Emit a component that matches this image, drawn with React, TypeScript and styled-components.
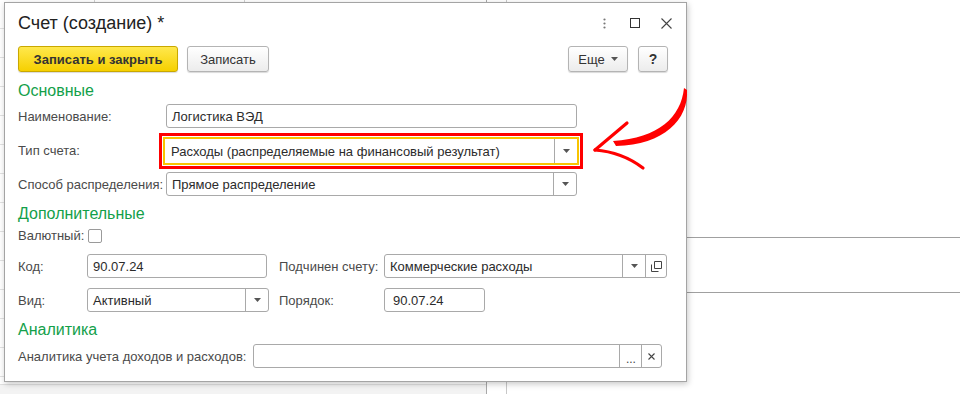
import styled, { createGlobalStyle } from 'styled-components';

const GlobalStyles = createGlobalStyle`
  html, body {
    margin: 0;
    padding: 0;
    background: #fff;
  }
  body {
    font-family: 'Liberation Sans', Arial, sans-serif;
    font-size: 13px;
    color: #333;
  }
  #root {
    width: 960px;
    height: 394px;
    position: relative;
    overflow: hidden;
  }
`;

/* backdrop: the list form behind the dialog */

const Backdrop = styled.div`
  display: flex;
  width: 960px;
  height: 394px;
`;

const LeftPane = styled.div`
  width: 486px;
  flex: 0 0 auto;
  display: flex;
  flex-direction: column;
  border-right: 1px solid #a8a8a8;
  background: repeating-linear-gradient(to bottom, transparent 0 28px, #e2e2e2 28px 29px);
`;

const HeadRow = styled.div`
  display: flex;
  height: 20px;
  background: #fff;
`;

const HeadCell = styled.div<{ $w: number }>`
  width: ${(p) => p.$w}px;
  border-right: 1px solid #d0d0d0;
`;

const PaneFill = styled.div`
  flex: 1;
`;

const PaneFooter = styled.div`
  height: 9px;
  background: #f3f3f3;
  border-top: 1px solid #e0e0e0;
`;

const Gutter = styled.div`
  width: 19px;
  flex: 0 0 auto;
  border-right: 1px solid #c8c8c8;
`;

const RightPane = styled.div`
  flex: 1;
  padding-top: 237px;
`;

const RightRow = styled.div`
  height: 54px;
  border-top: 1px solid #a0a0a0;
  border-bottom: 1px solid #a0a0a0;
`;

/* dialog window */

const Dialog = styled.div`
  position: absolute;
  left: 4px;
  top: 2px;
  width: 683px;
  height: 380px;
  box-sizing: border-box;
  border: 1px solid #a4a4a4;
  background: #fff;
  box-shadow: 1px 2px 6px rgba(0, 0, 0, 0.22);
  display: flex;
  flex-direction: column;
`;

const TitleBar = styled.div`
  height: 40px;
  display: flex;
  align-items: center;
  padding: 0 14px 0 13px;
`;

const Title = styled.div`
  flex: 1;
  font-size: 18px;
  color: #222;
`;

const TitleIcon = styled.div<{ $ml: number }>`
  margin-left: ${(p) => p.$ml}px;
  display: flex;
`;

const Body = styled.div`
  padding: 0 18px 0 13px;
  display: flex;
  flex-direction: column;
`;

const Toolbar = styled.div`
  margin-top: 3px;
  display: flex;
  gap: 9px;
`;

const Spacer = styled.div`
  flex: 1;
`;

const Button = styled.button<{ $w: number; $primary?: boolean; $strong?: boolean }>`
  width: ${(p) => p.$w}px;
  height: 26px;
  box-sizing: border-box;
  padding: 0;
  margin: 0;
  font-family: 'Liberation Sans', Arial, sans-serif;
  font-size: ${(p) => (p.$strong ? 14 : 13)}px;
  font-weight: ${(p) => (p.$primary || p.$strong ? 700 : 400)};
  color: #333;
  display: flex;
  align-items: center;
  justify-content: center;
  gap: 6px;
  border-radius: 3px;
  border: 1px solid ${(p) => (p.$primary ? '#c9a800' : '#b4b4b4')};
  background: ${(p) =>
    p.$primary ? 'linear-gradient(#ffe84d, #f6d000)' : 'linear-gradient(#ffffff, #ececec)'};
  box-shadow: 0 1px 1px rgba(0, 0, 0, 0.15);
`;

const RightTools = styled.div`
  display: flex;
  gap: 10px;
`;

const Heading = styled.div<{ $mt: number }>`
  margin-top: ${(p) => p.$mt}px;
  height: 20px;
  line-height: 20px;
  font-size: 16px;
  color: #13a04a;
`;

const TopGrid = styled.div`
  margin-top: 3px;
  display: grid;
  grid-template-columns: 148px 411px;
  grid-auto-rows: 24px;
  row-gap: 10px;
  align-items: center;
`;

const MoreGrid = styled.div`
  margin-top: 3px;
  display: grid;
  grid-template-columns: 69px 182px 115px 283px;
  grid-template-rows: 17px 24px 24px;
  row-gap: 10px;
  align-items: center;
`;

const Label = styled.div<{ $pl?: number }>`
  color: #4a4a4a;
  white-space: nowrap;
  padding-left: ${(p) => p.$pl ?? 0}px;
`;

const Checkbox = styled.div`
  width: 14px;
  height: 14px;
  box-sizing: border-box;
  border: 1px solid #9a9a9a;
  border-radius: 2px;
  background: #fff;
  margin-left: 1px;
`;

const AnalyticsRow = styled.div`
  margin-top: 4px;
  display: flex;
  align-items: center;
  gap: 7px;
`;

/* red annotation frame drawn around the highlighted field */
const HighlightFrame = styled.div`
  margin: -5px -6px -7px -7px;
  border: 3px solid #ff0000;
  padding: 1px;
`;

const FieldBox = styled.div<{ $w?: number; $hl?: boolean }>`
  width: ${(p) => (p.$w ? `${p.$w}px` : '100%')};
  height: ${(p) => (p.$hl ? 28 : 24)}px;
  box-sizing: border-box;
  display: flex;
  border: ${(p) => (p.$hl ? '2px solid #f8c400' : '1px solid #a9a9a9')};
  border-radius: ${(p) => (p.$hl ? 0 : 3)}px;
  background: #fff;
`;

const FieldText = styled.div<{ $pl: number }>`
  flex: 1;
  min-width: 0;
  padding-left: ${(p) => p.$pl}px;
  display: flex;
  align-items: center;
  color: #2b2b2b;
  white-space: nowrap;
  overflow: hidden;
`;

const FieldBtn = styled.div<{ $w: number }>`
  width: ${(p) => p.$w}px;
  flex: 0 0 auto;
  border-left: 1px solid #a9a9a9;
  display: flex;
  align-items: center;
  justify-content: center;
  color: #444;
  font-size: 12px;
`;

const Dots = styled.span`
  margin-top: 6px;
`;

const Overlay = styled.svg`
  position: absolute;
  left: 0;
  top: 0;
  pointer-events: none;
`;

type BtnKind = 'drop' | 'open' | 'more' | 'clear';

const DropIcon = () => (
  <svg width="7" height="4" viewBox="0 0 7 4">
    <path d="M0 0h7L3.5 4z" fill="#555" />
  </svg>
);

const btnIcon = (kind: BtnKind) => {
  if (kind === 'drop') return <DropIcon />;
  if (kind === 'open')
    return (
      <svg width="11" height="11" viewBox="0 0 11 11">
        <path d="M3.5 0.5h7v7h-7z" fill="none" stroke="#444" />
        <path d="M0.5 3.5v7h7" fill="none" stroke="#444" />
      </svg>
    );
  if (kind === 'more') return <Dots>...</Dots>;
  return (
    <svg width="7" height="7" viewBox="0 0 7 7">
      <path d="M0.5 0.5l6 6M6.5 0.5l-6 6" stroke="#444" strokeWidth="1.1" />
    </svg>
  );
};

const btnWidth: Record<BtnKind, number> = { drop: 22, open: 20, more: 21, clear: 19 };

type FieldProps = {
  value?: string;
  width?: number;
  pad?: number;
  buttons?: BtnKind[];
  highlight?: boolean;
};

const Field = ({ value = '', width, pad = 5, buttons = [], highlight }: FieldProps) => {
  const box = (
    <FieldBox $w={width} $hl={highlight}>
      <FieldText $pl={highlight ? pad + 1 : pad}>{value}</FieldText>
      {buttons.map((b) => (
        <FieldBtn key={b} $w={btnWidth[b]}>
          {btnIcon(b)}
        </FieldBtn>
      ))}
    </FieldBox>
  );
  return highlight ? <HighlightFrame>{box}</HighlightFrame> : box;
};

export default function App() {
  return (
    <>
      <GlobalStyles />

      <Backdrop>
        <LeftPane>
          <HeadRow>
            <HeadCell $w={94} />
            <HeadCell $w={149} />
          </HeadRow>
          <PaneFill />
          <PaneFooter />
        </LeftPane>
        <Gutter />
        <RightPane>
          <RightRow />
        </RightPane>
      </Backdrop>

      <Dialog>
        <TitleBar>
          <Title>Счет (создание) *</Title>
          <TitleIcon $ml={0}>
            <svg width="3" height="11" viewBox="0 0 3 11">
              <circle cx="1.5" cy="1.5" r="1.1" fill="#777" />
              <circle cx="1.5" cy="5.5" r="1.1" fill="#777" />
              <circle cx="1.5" cy="9.5" r="1.1" fill="#777" />
            </svg>
          </TitleIcon>
          <TitleIcon $ml={24}>
            <svg width="10" height="10" viewBox="0 0 10 10">
              <rect x="0.5" y="0.5" width="9" height="9" fill="none" stroke="#333" />
            </svg>
          </TitleIcon>
          <TitleIcon $ml={21}>
            <svg width="11" height="11" viewBox="0 0 11 11">
              <path d="M0.5 0.5l10 10M10.5 0.5l-10 10" stroke="#444" strokeWidth="1.1" />
            </svg>
          </TitleIcon>
        </TitleBar>

        <Body>
          <Toolbar>
            <Button $w={160} $primary>
              Записать и закрыть
            </Button>
            <Button $w={82}>Записать</Button>
            <Spacer />
            <RightTools>
              <Button $w={60}>
                Еще <DropIcon />
              </Button>
              <Button $w={30} $strong>
                ?
              </Button>
            </RightTools>
          </Toolbar>

          <Heading $mt={9}>Основные</Heading>
          <TopGrid>
            <Label>Наименование:</Label>
            <Field value="Логистика ВЭД" />
            <Label>Тип счета:</Label>
            <Field value="Расходы (распределяемые на финансовый результат)" buttons={['drop']} highlight />
            <Label>Способ распределения:</Label>
            <Field value="Прямое распределение" buttons={['drop']} />
          </TopGrid>

          <Heading $mt={8}>Дополнительные</Heading>
          <MoreGrid>
            <Label>Валютный:</Label>
            <Checkbox />
            <span />
            <span />
            <Label>Код:</Label>
            <Field value="90.07.24" width={180} />
            <Label $pl={10}>Подчинен счету:</Label>
            <Field value="Коммерческие расходы" buttons={['drop', 'open']} />
            <Label>Вид:</Label>
            <Field value="Активный" width={182} buttons={['drop']} />
            <Label $pl={10}>Порядок:</Label>
            <Field value="90.07.24" width={101} pad={8} />
          </MoreGrid>

          <Heading $mt={8}>Аналитика</Heading>
          <AnalyticsRow>
            <Label>Аналитика учета доходов и расходов:</Label>
            <Field width={409} buttons={['more', 'clear']} />
          </AnalyticsRow>
        </Body>
      </Dialog>

      <Overlay width="960" height="394" viewBox="0 0 960 394">
        <path
          d="M684 88 C681 117 659 138 613 141 L616 146 C664 145 689 119 687 90 Z"
          fill="#ff0000"
        />
        <path d="M595 150 L627 123" stroke="#ff0000" strokeWidth="3.2" strokeLinecap="round" />
        <path d="M595 150 Q622 152 643 168" stroke="#ff0000" strokeWidth="3.2" fill="none" strokeLinecap="round" />
      </Overlay>
    </>
  );
}
